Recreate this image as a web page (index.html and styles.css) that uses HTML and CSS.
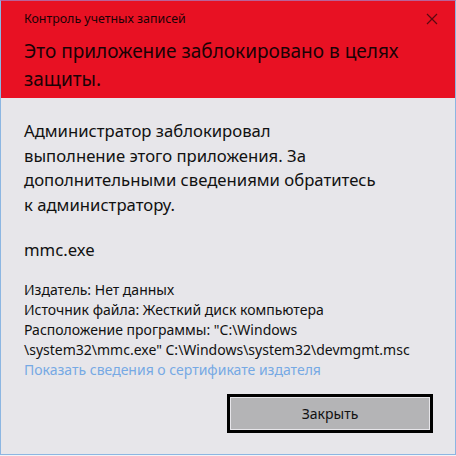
FILE: index.html
```html
<!DOCTYPE html>
<html lang="ru">
<head>
    <meta charset="UTF-8">
    <title>Контроль учетных записей</title>
    <link rel="stylesheet" href="styles.css">
</head>
<body>
    <div class="window">
        <div class="header">
            <div class="titlebar">
                <span class="caption">Контроль учетных записей</span>
                <svg class="close" width="12" height="12" viewBox="0 0 12 12">
                    <path d="M1 1 L11 11 M11 1 L1 11" stroke="#5a0a10" stroke-width="1.2" fill="none"/>
                </svg>
            </div>
            <h1>Это приложение заблокировано в целях защиты.</h1>
        </div>
        <div class="content">
            <p class="message">Администратор заблокировал<br>выполнение этого приложения. За<br>дополнительными сведениями обратитесь<br>к администратору.</p>
            <p class="program">mmc.exe</p>
            <div class="details">
                <p>Издатель: Нет данных</p>
                <p>Источник файла: Жесткий диск компьютера</p>
                <p>Расположение программы: "C:\Windows<br>\system32\mmc.exe" C:\Windows\system32\devmgmt.msc</p>
                <a class="cert-link" href="#">Показать сведения о сертификате издателя</a>
            </div>
            <div class="actions">
                <button>Закрыть</button>
            </div>
        </div>
    </div>
</body>
</html>
```

FILE: styles.css
```css
body {
    margin: 0;
    font-family: 'Noto Sans', sans-serif;
    background-color: #f4f4f6;
}
.window {
    width: 456px;
    height: 455px;
    box-sizing: border-box;
    border: 1px solid #8cb6e2;
    border-top-color: #b9629a;
    background-color: #e7e6ea;
    display: flex;
    flex-direction: column;
}
.header {
    background-color: #e81123;
    height: 97px;
    box-sizing: border-box;
    padding: 8px 17px 0 23px;
    color: #1a0205;
}
.titlebar {
    display: flex;
    justify-content: space-between;
    align-items: center;
    height: 18px;
}
.caption {
    font-size: 12.4px;
}
.close {
    margin-top: 2px;
}
h1 {
    margin: 10px 0 0 0;
    font-size: 19px;
    font-weight: normal;
    line-height: 28px;
    width: 400px;
}
.content {
    padding: 21px 22px 0 23px;
    color: #111;
}
.message {
    margin: 0;
    font-size: 16.7px;
    line-height: 24.5px;
}
.program {
    margin: 21px 0 0 0;
    font-size: 16.7px;
    line-height: 24px;
}
.details {
    margin-top: 18px;
    font-size: 14px;
    line-height: 20px;
}
.details p {
    margin: 0;
}
.cert-link {
    color: #76a9e4;
    text-decoration: none;
}
.actions {
    display: flex;
    justify-content: flex-end;
    margin-top: 14px;
}
button {
    width: 206px;
    height: 39px;
    border: 3px solid #000;
    background-color: #b4b4b6;
    box-shadow: inset 0 0 0 1px #e7e6ea;
    font-family: 'Noto Sans', sans-serif;
    font-size: 14px;
    color: #111;
}
```
